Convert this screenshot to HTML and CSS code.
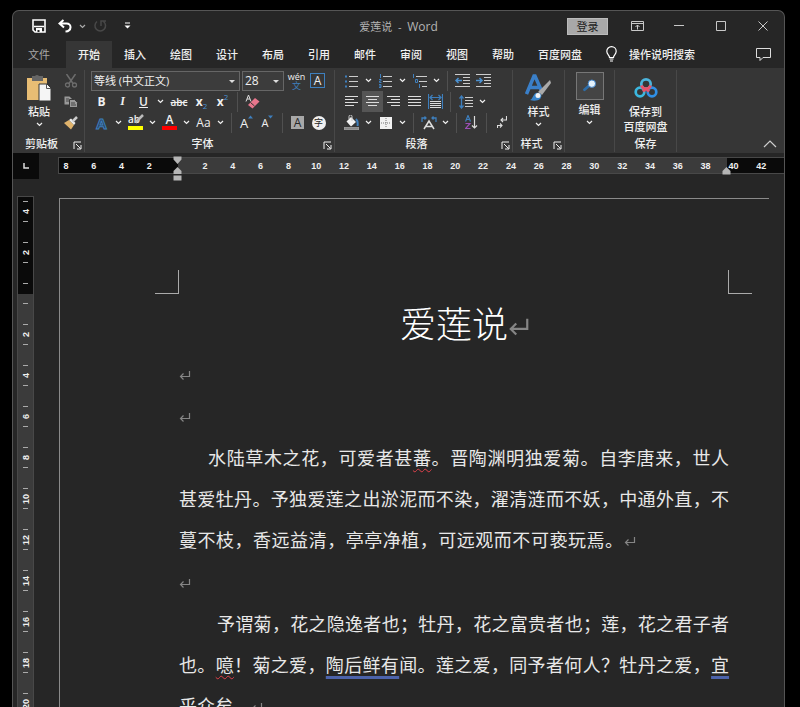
FILE: index.html
```html
<!DOCTYPE html>
<html lang="zh-CN">
<head>
    <meta charset="UTF-8">
    <meta name="viewport" content="width=device-width, initial-scale=1.0">
    <title>爱莲说 - Word</title>
    <link rel="stylesheet" href="styles.css">
</head>
<body>
    <svg class="defs" aria-hidden="true">
        <symbol id="chev" viewBox="0 0 7 5"><path d="M1 1l2.500 2.500L6 1" fill="none" stroke="currentColor" stroke-width="1.200"/></symbol>
        <symbol id="launch" viewBox="0 0 9 9"><path d="M1 8V1h7M3 3l4.500 4.500M8 4v4H4" fill="none" stroke="currentColor"/></symbol>
        <symbol id="mark" viewBox="0 0 12 10"><path d="M10.500 0v5.500H1.500M4.500 2.500l-3 3 3 3" fill="none" stroke="currentColor" stroke-width="1.200"/></symbol>
    </svg>

    <div class="window">
        <header class="titlebar">
            <div class="quick">
                <button aria-label="保存"><svg width="14" height="14" viewBox="0 0 14 14"><path d="M1 1h12v12H3l-2-2z" fill="none" stroke="#fff" stroke-width="1.600"/><path d="M2 7.500h10" stroke="#fff" stroke-width="1.600"/><path d="M4 9h6v4H4z" fill="#fff"/><path d="M5.500 11h2v2h-2z" fill="#262626"/></svg></button>
                <button class="undo" aria-label="撤消"><svg width="14" height="14" viewBox="0 0 14 14"><path d="M5.500 1L1.500 4.500l4.500 4M2 4.500h6.500c5.500 0 5.500 7.500-1 8" fill="none" stroke="#fff" stroke-width="2"/></svg></button>
                <button class="drop dim" aria-label="撤消列表"><svg width="7" height="5"><use href="#chev"/></svg></button>
                <button class="redo" aria-label="恢复"><svg width="14" height="14" viewBox="0 0 14 14"><path d="M4 2.500a5.300 5.300 0 1 0 6.500 0M8 7V2h5" fill="none" stroke="#484848" stroke-width="1.500"/></svg></button>
                <button class="custom" aria-label="自定义快速访问工具栏"><svg width="7" height="8" viewBox="0 0 7 8"><path d="M1 1h5" stroke="#fff"/><path d="M0.500 3.500h6l-3 3z" fill="#fff"/></svg></button>
            </div>
            <h1 class="caption">爱莲说&nbsp; - &nbsp;<span>Word</span></h1>
            <div class="controls">
                <button class="login">登录</button>
                <button class="ctl" aria-label="功能区显示选项"><svg width="13" height="10" viewBox="0 0 13 10"><path d="M.5.5h12v9H.5zM.5 2.500h12M6.500 8.500V4M4.500 6l2-2 2 2" fill="none" stroke="#c8c8c8"/></svg></button>
                <button class="ctl" aria-label="最小化"><svg width="10" height="10" viewBox="0 0 10 10"><path d="M0 4.500h10" stroke="#c8c8c8"/></svg></button>
                <button class="ctl" aria-label="最大化"><svg width="10" height="10" viewBox="0 0 10 10"><path d="M.5.5h9v9h-9z" fill="none" stroke="#c8c8c8"/></svg></button>
                <button class="ctl" aria-label="关闭"><svg width="10" height="10" viewBox="0 0 10 10"><path d="M.5.5l9 9M9.500.5l-9 9" stroke="#c8c8c8"/></svg></button>
            </div>
        </header>

        <nav class="tabs">
            <a href="#" class="file">文件</a>
            <a href="#" class="current">开始</a>
            <a href="#">插入</a>
            <a href="#">绘图</a>
            <a href="#">设计</a>
            <a href="#">布局</a>
            <a href="#">引用</a>
            <a href="#">邮件</a>
            <a href="#">审阅</a>
            <a href="#">视图</a>
            <a href="#">帮助</a>
            <a href="#">百度网盘</a>
            <a href="#" class="tell">
                <svg width="11" height="16" viewBox="0 0 11 16"><path d="M3.500 11.500C3.500 9 .8 8.500.8 5.300a4.700 4.700 0 0 1 9.400 0c0 3.200-2.700 3.700-2.700 6.200zM3.500 13h4M4 15h3" fill="none" stroke="#fff" stroke-width="1.200"/></svg>
                操作说明搜索</a>
            <button class="comment" aria-label="批注"><svg width="15" height="14" viewBox="0 0 15 14"><path d="M.5.5h14v9H7l-3 3v-3H.5z" fill="none" stroke="#ddd"/></svg></button>
        </nav>

        <div class="ribbon">
            <section class="group clipboard">
                <div class="tools across">
                    <button class="big">
                        <svg width="26" height="28" viewBox="0 0 26 28"><path d="M1 4h20v22H1z" fill="#e8bd74"/><path d="M6 2h3a2.500 2.500 0 0 1 4 0h4v5H6z" fill="#666"/><path d="M13 10h8l4 4v13H13z" fill="#f5f5f5" stroke="#363636"/><path d="M20.500 10v4.500H25" fill="none" stroke="#555"/></svg>
                        <span>粘贴</span>
                        <svg width="7" height="5"><use href="#chev"/></svg>
                    </button>
                    <div class="stack">
                        <button class="tool" aria-label="剪切"><svg width="14" height="14" viewBox="0 0 14 14"><path d="M2.500 0l6.500 9.500M11.500 0L5 9.500" fill="none" stroke="#6c6c6c" stroke-width="1.500"/><circle cx="3.500" cy="11" r="2" fill="none" stroke="#6c6c6c" stroke-width="1.300"/><circle cx="10.500" cy="11" r="2" fill="none" stroke="#6c6c6c" stroke-width="1.300"/></svg></button>
                        <button class="tool" aria-label="复制"><svg width="14" height="12" viewBox="0 0 14 12"><path d="M.5.5h5l2 2v6h-7z" fill="#999"/><path d="M5.500 3.500h5l3 3v5h-8z" fill="#999" stroke="#363636"/><path d="M2 3h3M2 5h3M7 7h4M7 9h5" stroke="#444"/></svg></button>
                        <button class="tool" aria-label="格式刷"><svg width="14" height="14" viewBox="0 0 14 14"><path d="M0 7l5-3 5 5-3 4.500z" fill="#e0b36c"/><path d="M5 4l2-1.500 4.500 4.500L10 9z" fill="#eee"/><path d="M8.500 5.500L13 1" stroke="#ccc" stroke-width="2.500"/></svg></button>
                    </div>
                </div>
                <div class="name"><span>剪贴板</span><button aria-label="剪贴板选项"><svg width="9" height="9"><use href="#launch"/></svg></button></div>
            </section>

            <section class="group font">
                <div class="tools">
                    <div class="row">
                        <label class="combo family"><select aria-label="字体"><option>等线 (中文正文)</option></select></label>
                        <label class="combo size"><select aria-label="字号"><option>28</option></select></label>
                        <button class="tool pinyin" aria-label="拼音指南"><span>wén</span><i>文</i></button>
                        <button class="tool" aria-label="字符边框"><span class="boxed">A</span></button>
                    </div>
                    <div class="row">
                        <button class="tool"><b>B</b></button>
                        <button class="tool italic"><i>I</i></button>
                        <button class="tool"><u>U</u></button>
                        <button class="drop" aria-label="下划线样式"><svg width="7" height="5"><use href="#chev"/></svg></button>
                        <button class="tool wide"><s>abc</s></button>
                        <button class="tool script low"><b>x</b><span>2</span></button>
                        <button class="tool script"><b>x</b><span>2</span></button>
                        <span class="sep"></span>
                        <button class="tool" aria-label="清除格式"><svg width="15" height="15" viewBox="0 0 15 15"><path d="M1 7.500L3.500 1 6 7.500M2 5h3" fill="none" stroke="#ddd"/><path d="M3 11l7-7 4.500 3.500-7 7z" fill="#e8768c"/><path d="M5.500 8.500l4 3.500" stroke="#363636"/></svg></button>
                    </div>
                    <div class="row">
                        <button class="tool effect">A</button>
                        <button class="drop" aria-label="文本效果"><svg width="7" height="5"><use href="#chev"/></svg></button>
                        <button class="tool swatch yellow"><span>ab</span><svg class="pen" width="10" height="10" viewBox="0 0 10 10"><path d="M1.500 8.500L9 1" stroke="#bbb" stroke-width="2.500"/></svg></button>
                        <button class="drop" aria-label="突出显示颜色"><svg width="7" height="5"><use href="#chev"/></svg></button>
                        <button class="tool swatch red"><span>A</span></button>
                        <button class="drop" aria-label="字体颜色"><svg width="7" height="5"><use href="#chev"/></svg></button>
                        <button class="tool case">Aa</button>
                        <button class="drop" aria-label="更改大小写"><svg width="7" height="5"><use href="#chev"/></svg></button>
                        <span class="sep"></span>
                        <button class="tool grow"><span>A</span><svg width="5" height="4" viewBox="0 0 5 4"><path d="M0 3.500L2.500.5 5 3.500z" fill="#3e7fbd"/></svg></button>
                        <button class="tool grow small"><span>A</span><svg width="5" height="4" viewBox="0 0 5 4"><path d="M0 .5L2.500 3.500 5 .5z" fill="#3e7fbd"/></svg></button>
                        <span class="sep"></span>
                        <button class="tool"><span class="shade">A</span></button>
                        <button class="tool"><span class="ring">字</span></button>
                    </div>
                </div>
                <div class="name"><span>字体</span><button aria-label="字体选项"><svg width="9" height="9"><use href="#launch"/></svg></button></div>
            </section>

            <section class="group para">
                <div class="tools">
                    <div class="row">
                        <button class="tool" aria-label="项目符号"><svg width="13" height="14" viewBox="0 0 13 14"><path d="M4 2.500h9M4 7.500h9M4 12.500h9" stroke="#ccc"/><path d="M0 1.500h2v2H0zM0 6.500h2v2H0zM0 11.500h2v2H0z" fill="#3e7fbd"/></svg></button>
                        <button class="drop" aria-label="项目符号库"><svg width="7" height="5"><use href="#chev"/></svg></button>
                        <button class="tool" aria-label="编号"><svg width="13" height="14" viewBox="0 0 13 14"><path d="M4 2.500h9M4 7.500h9M4 12.500h9" stroke="#ccc"/><path d="M1.500 0v4M0 5.500h2v1.500H.5v1.500H2.500M0 10.500h2v3H0M0 12h2" fill="none" stroke="#3e7fbd"/></svg></button>
                        <button class="drop" aria-label="编号库"><svg width="7" height="5"><use href="#chev"/></svg></button>
                        <button class="tool" aria-label="多级列表"><svg width="15" height="14" viewBox="0 0 15 14"><path d="M4 2.500h11M7 7.500h8M10 12.500h5" stroke="#ccc"/><path d="M1.500 0v4M3.500 5.500h2v3h-2zM7.500 10v4" fill="none" stroke="#3e7fbd"/></svg></button>
                        <button class="drop" aria-label="列表库"><svg width="7" height="5"><use href="#chev"/></svg></button>
                        <span class="sep"></span>
                        <button class="tool" aria-label="减少缩进量"><svg width="15" height="13" viewBox="0 0 15 13"><path d="M0 .5h15M8 3.500h7M8 6.500h7M8 9.500h7M0 12.500h15" stroke="#ccc"/><path d="M7 6.500H1M3.500 4L1 6.500 3.500 9" fill="none" stroke="#4a90d0" stroke-width="1.500"/></svg></button>
                        <button class="tool" aria-label="增加缩进量"><svg width="15" height="13" viewBox="0 0 15 13"><path d="M0 .5h15M8 3.500h7M8 6.500h7M8 9.500h7M0 12.500h15" stroke="#ccc"/><path d="M0 6.500h6M3.500 4L6 6.500 3.500 9" fill="none" stroke="#4a90d0" stroke-width="1.500"/></svg></button>
                    </div>
                    <div class="row">
                        <button class="tool" aria-label="左对齐"><svg width="13" height="11" viewBox="0 0 13 11"><path d="M0 .5h13M0 3.500h9M0 6.500h13M0 9.500h9" stroke="#ddd"/></svg></button>
                        <button class="tool on" aria-label="居中"><svg width="13" height="11" viewBox="0 0 13 11"><path d="M0 .5h13M2 3.500h9M0 6.500h13M2 9.500h9" stroke="#ddd"/></svg></button>
                        <button class="tool" aria-label="右对齐"><svg width="13" height="11" viewBox="0 0 13 11"><path d="M0 .5h13M4 3.500h9M0 6.500h13M4 9.500h9" stroke="#ddd"/></svg></button>
                        <button class="tool" aria-label="两端对齐"><svg width="13" height="11" viewBox="0 0 13 11"><path d="M0 .5h13M0 3.500h13M0 6.500h13M0 9.500h13" stroke="#ddd"/></svg></button>
                        <button class="tool" aria-label="分散对齐"><svg width="15" height="15" viewBox="0 0 15 15"><path d="M.5 0v15M14.500 0v15M2 3.500h11M4.500 1L2 3.500 4.500 6M10.500 1L13 3.500 10.500 6" fill="none" stroke="#3e7fbd" stroke-width="1.200"/><path d="M2 7.500h11M2 9.500h11M2 11.500h11M2 13.500h11" stroke="#ddd"/></svg></button>
                        <span class="sep"></span>
                        <button class="tool" aria-label="行距"><svg width="14" height="14" viewBox="0 0 14 14"><path d="M6 2.500h8M6 5.500h8M6 8.500h8M6 11.500h8" stroke="#ccc"/><path d="M2.500 1v12M.5 3.500L2.500 1l2 2.500M.5 10.500l2 2.500 2-2.500" fill="none" stroke="#3e7fbd" stroke-width="1.300"/></svg></button>
                        <button class="drop" aria-label="行距选项"><svg width="7" height="5"><use href="#chev"/></svg></button>
                    </div>
                    <div class="row">
                        <button class="tool" aria-label="底纹"><svg width="15" height="15" viewBox="0 0 15 15"><path d="M2.500 6.500L7 2l5 5-5 4.500z" fill="#f2f2f2"/><path d="M5 4V1.500a1.500 1.500 0 0 1 3 0V6" fill="none" stroke="#ccc"/><path d="M12 4c2 2 2 4 1.500 7" fill="none" stroke="#3e7fbd" stroke-width="2"/><path d="M0 12.500h15v2H0z" fill="#888" stroke="#ccc" stroke-width=".5"/></svg></button>
                        <button class="drop" aria-label="底纹颜色"><svg width="7" height="5"><use href="#chev"/></svg></button>
                        <button class="tool" aria-label="边框"><svg width="12" height="12" viewBox="0 0 12 12"><path d="M0 0h12v12H0z" fill="#f2f2f2"/><path d="M6 1v10M1 6h10" stroke="#777" stroke-dasharray="1 1"/></svg></button>
                        <button class="drop" aria-label="边框样式"><svg width="7" height="5"><use href="#chev"/></svg></button>
                        <span class="sep"></span>
                        <button class="tool" aria-label="中文版式"><svg width="16" height="14" viewBox="0 0 16 14"><path d="M3 13l5-8 5 8M5 10.500h6" fill="none" stroke="#ddd" stroke-width="1.500"/><path d="M1 6V2h4M3.500.5L5 2 3.500 3.500M15 6V2h-4M12.500.5L11 2l1.500 1.500" fill="none" stroke="#3e7fbd" stroke-width="1.300"/></svg></button>
                        <button class="drop" aria-label="中文版式选项"><svg width="7" height="5"><use href="#chev"/></svg></button>
                        <span class="sep"></span>
                        <button class="tool" aria-label="排序"><svg width="13" height="15" viewBox="0 0 13 15"><path d="M.5 6.500L3 .5l2.500 6M1.500 4.500h3" fill="none" stroke="#3e7fbd" stroke-width="1.200"/><path d="M.5 8.500H5l-4.500 5H5.500" fill="none" stroke="#9b4fb5" stroke-width="1.200"/><path d="M9.500 1v12M7 10.500L9.500 13l2.500-2.500" fill="none" stroke="#ddd" stroke-width="1.200"/></svg></button>
                        <span class="sep"></span>
                        <button class="tool" aria-label="显示编辑标记"><svg width="10" height="13" viewBox="0 0 10 13"><path d="M9.500 0v4H4M6 2L4 4l2 2M0 9.500h5M3 7.500l2 2-2 2M.5 12V9.500" fill="none" stroke="#ddd" stroke-width="1.100"/></svg></button>
                    </div>
                </div>
                <div class="name"><span>段落</span><button aria-label="段落选项"><svg width="9" height="9"><use href="#launch"/></svg></button></div>
            </section>

            <section class="group styles">
                <div class="tools">
                    <button class="big">
                        <svg width="27" height="28" viewBox="0 0 27 28"><path d="M1.500 20L9 2h1l7 16M4.500 13.500h10" fill="none" stroke="#3a7fc8" stroke-width="3.500"/><path d="M13 18L25 6l1 3-9 12z" fill="#aaa"/><path d="M5 26c3-1 3-6 6-7 5-1 7 3 4 6-2 2-7 2-10 1z" fill="#3a86cc"/><circle cx="13" cy="21.500" r="2.500" fill="#f3f3f3"/></svg>
                        <span>样式</span>
                        <svg width="7" height="5"><use href="#chev"/></svg>
                    </button>
                </div>
                <div class="name"><span>样式</span><button aria-label="样式选项"><svg width="9" height="9"><use href="#launch"/></svg></button></div>
            </section>

            <section class="group edit">
                <div class="tools">
                    <button class="big">
                        <svg class="framed" width="28" height="28" viewBox="0 0 28 28"><path d="M8 18l7-6" stroke="#2e6da8" stroke-width="3" stroke-linecap="round"/><circle cx="16" cy="11.500" r="4" fill="#e4f1fb" stroke="#3a7fc8"/></svg>
                        <span>编辑</span>
                        <svg width="7" height="5"><use href="#chev"/></svg>
                    </button>
                </div>
            </section>

            <section class="group save">
                <div class="tools">
                    <button class="big">
                        <svg width="24" height="28" viewBox="0 0 24 28"><g fill="none" stroke-width="2.700"><circle cx="6" cy="18" r="4.300" stroke="#3bb8e0"/><circle cx="18" cy="18" r="4.300" stroke="#2f8fe6"/><circle cx="12" cy="10" r="4.700" stroke="#4cb4dc"/><path d="M7.500 11.500a4.700 4.700 0 0 0 9 0M12 14.500L9 17.500M12 14.500l3 3" stroke="#e8526a"/></g></svg>
                        <span>保存到<br>百度网盘</span>
                    </button>
                </div>
                <div class="name"><span>保存</span></div>
            </section>

            <button class="collapse" aria-label="折叠功能区"><svg width="14" height="8" viewBox="0 0 14 8"><path d="M1 7l6-6 6 6" fill="none" stroke="#ccc" stroke-width="1.200"/></svg></button>
        </div>

        <div class="hbar">
            <button class="tabstop" aria-label="制表符"><svg width="6" height="6" viewBox="0 0 6 6"><path d="M1 0v5h5" fill="none" stroke="#ddd" stroke-width="1.500"/></svg></button>
            <div class="hruler">
                <div class="nums">
                    <span>8</span><span>6</span><span>4</span><span>2</span><span></span><span>2</span><span>4</span><span>6</span><span>8</span><span>10</span><span>12</span><span>14</span><span>16</span><span>18</span><span>20</span><span>22</span><span>24</span><span>26</span><span>28</span><span>30</span><span>32</span><span>34</span><span>36</span><span>38</span><span>40</span><span>42</span>
                </div>
                <svg class="indent" width="9" height="25" viewBox="0 0 9 25"><path d="M.5.5h8v3l-4 4.500-4-4.500zM4.500 11l4 4v3h-8v-3zM.5 19.500h8v5h-8z" fill="#b5b5b5"/></svg>
                <svg class="indent end" width="9" height="8" viewBox="0 0 9 8"><path d="M4.500 0l4 4v3.500h-8V4z" fill="#b5b5b5"/></svg>
            </div>
        </div>

        <div class="work">
            <div class="vruler">
                <div class="marks">
                    <span>4</span><span>2</span><span></span><span>2</span><span>4</span><span>6</span><span>8</span><span>10</span><span>12</span><span>14</span><span>16</span><span>18</span><span>20</span>
                </div>
            </div>
            <main class="page">
                <div class="corners"><span class="left"></span><span class="right"></span></div>
                <h2>爱莲说<svg class="mark" width="22" height="20"><use href="#mark"/></svg></h2>
                <p><svg class="mark" width="12" height="10"><use href="#mark"/></svg></p>
                <p><svg class="mark" width="12" height="10"><use href="#mark"/></svg></p>
                <p class="first">水陆草木之花，可爱者甚<span class="spell">蕃</span>。晋陶渊明独爱菊。自李唐来，世人甚爱牡丹。予独爱莲之出淤泥而不染，濯清涟而不妖，中通外直，不<span class="last">蔓不枝，香远益清，亭亭净植，可远观而不可亵玩焉。<svg class="mark" width="12" height="10"><use href="#mark"/></svg></span></p>
                <p><svg class="mark" width="12" height="10"><use href="#mark"/></svg></p>
                <p class="second">予谓菊，花之隐逸者也；牡丹，花之富贵者也；莲，花之君子者也。<span class="spell">噫</span>！菊之爱，<span class="grammar">陶后鲜有</span>闻。莲之爱，同予者何人？牡丹之爱，<span class="grammar">宜</span>乎众矣。<svg class="mark" width="12" height="10"><use href="#mark"/></svg></p>
            </main>
        </div>
    </div>
</body>
</html>
```

FILE: styles.css
```css
* {
    box-sizing: border-box;
}

body {
    margin: 0;
    height: 100vh;
    padding: 10px 15px 0 12px;
    overflow: hidden;
    background: #000;
    color: #f0f0f0;
    font-family: "Open Sans", "Noto Sans CJK SC", sans-serif;
    font-size: 11px;
}

button {
    display: flex;
    align-items: center;
    justify-content: center;
    margin: 0;
    padding: 0;
    border: 0;
    background: none;
    color: inherit;
    font: inherit;
}

a {
    color: inherit;
    text-decoration: none;
}

svg {
    flex: none;
}

.defs {
    display: none;
}

.window {
    display: flex;
    flex-direction: column;
    height: 100%;
    border: 1px solid #555;
    border-bottom: 0;
    border-radius: 7px 7px 0 0;
    background: #262626;
    overflow: hidden;
}

/* title bar */
.titlebar {
    display: grid;
    grid-template-columns: 1fr auto 1fr;
    align-items: center;
    height: 30px;
}

.quick {
    display: flex;
    padding-left: 14px;
}

.quick button {
    width: 24px;
    height: 24px;
}

.quick .undo {
    width: 28px;
}

.quick .drop {
    width: 7px;
    color: #aaa;
}

.quick .redo {
    width: 28px;
}

.quick .custom {
    width: 26px;
}

.caption {
    margin: 0;
    color: #b4b4b4;
    font-size: 11px;
    font-weight: 400;
}

.caption span {
    font-size: 12px;
}

.controls {
    display: flex;
    align-items: center;
    justify-content: flex-end;
}

.ctl {
    width: 42px;
    height: 26px;
}

.login {
    width: 41px;
    height: 17px;
    margin-right: 8px;
    border: 1px solid #bbb;
    background: #a8a8a8;
    color: #222;
}

/* tabs */
.tabs {
    display: flex;
    height: 27px;
    padding-left: 3px;
    font-weight: 500;
    white-space: nowrap;
}

.tabs a {
    display: flex;
    align-items: center;
    padding: 0 12px 2px;
}

.tabs .file {
    margin-right: 4px;
    color: #a8a8a8;
    font-weight: 400;
}

.tabs .current {
    background: #363636;
}

.tabs .tell {
    gap: 12px;
    padding-left: 12px;
}

.comment {
    width: 42px;
    margin-left: auto;
}

/* ribbon */
.ribbon {
    display: flex;
    height: 85px;
    padding: 2px 0 1px;
    background: #363636;
}

.group {
    display: flex;
    flex-direction: column;
    flex: none;
    border-right: 1px solid #484848;
}

.clipboard { width: 72px; }
.font { width: 250px; }
.para { width: 178px; }
.styles { width: 52px; }
.edit { width: 50px; }
.save { width: 62px; }

.tools {
    height: 64px;
}

.font .tools,
.para .tools {
    padding-left: 6px;
}

.across {
    display: flex;
    padding-left: 6px;
}

.row {
    display: flex;
    align-items: center;
    height: 21px;
}

.stack {
    padding-left: 2px;
}

.tool {
    width: 21px;
    height: 21px;
    font-size: 12px;
}

.wide {
    width: 24px;
}

.stack .tool {
    width: 20px;
}

.tool.on {
    background: #555;
}

.drop {
    width: 13px;
    height: 21px;
}

.sep {
    width: 1px;
    height: 20px;
    margin: 0 4px;
    background: #505050;
}

.name {
    display: flex;
    align-items: center;
    height: 18px;
    font-weight: 500;
    text-align: center;
}

.name span {
    flex: 1;
}

.name button {
    width: 14px;
    padding-top: 5px;
}

.big {
    flex-direction: column;
    justify-content: flex-start;
    width: 100%;
    padding-top: 4px;
    font-weight: 500;
    line-height: 15px;
}

.across .big {
    width: 40px;
}

.big span {
    margin: 2px 0 3px;
}

.big .framed {
    border: 1px solid #777;
    background: #444;
}

.edit .big {
    padding-top: 2px;
}

.combo {
    position: relative;
    height: 20px;
    border: 1px solid #666;
    background: #3c3c3c;
}

.combo::after {
    content: "";
    position: absolute;
    top: 8px;
    right: 4px;
    border: 3px solid transparent;
    border-top-color: #ddd;
    border-bottom: 0;
}

.combo select {
    display: block;
    width: 100%;
    height: 18px;
    padding: 0 2px;
    border: 0;
    appearance: none;
    background: none;
    color: #f0f0f0;
    font: inherit;
}

.family {
    width: 149px;
    margin-right: 2px;
}

.size {
    width: 42px;
    margin-right: 2px;
    font-size: 12px;
}

.pinyin {
    flex-direction: column;
    font-size: 9px;
    line-height: 9px;
}

.pinyin i {
    color: #3e7fbd;
    font-style: normal;
}

.boxed {
    width: 15px;
    height: 15px;
    border: 1px solid #3e7fbd;
    line-height: 13px;
}

.italic {
    font-family: "Liberation Serif", serif;
    font-weight: 700;
}

.tool u {
    font-weight: 600;
}

.tool s {
    font-size: 10px;
    font-weight: 600;
}

.script span {
    align-self: flex-start;
    color: #4a90d0;
    font-size: 8px;
    line-height: 12px;
}

.script.low span {
    align-self: flex-end;
}

.effect {
    color: #27425f;
    font-size: 15px;
    font-weight: 700;
    -webkit-text-stroke: 1px #3e7fbd;
}

.swatch {
    position: relative;
    width: 21px;
    padding: 0 3px;
    font-weight: 600;
}

.swatch span {
    flex: 1;
    height: 15px;
    border-bottom: 4px solid red;
    line-height: 10px;
}

.yellow span {
    border-color: #ff0;
    font-size: 10px;
    line-height: 8px;
    text-align: left;
}

.pen {
    position: absolute;
    top: 2px;
    right: 2px;
}

.grow {
    font-size: 13px;
}

.grow svg {
    align-self: flex-start;
    margin-top: 3px;
}

.grow.small {
    font-size: 11px;
}

.shade {
    width: 13px;
    height: 13px;
    background: #a8a8a8;
    color: #262626;
    line-height: 13px;
}

.ring {
    width: 14px;
    height: 14px;
    border-radius: 50%;
    background: #f0f0f0;
    color: #262626;
    font-size: 9px;
    line-height: 13px;
}

.collapse {
    align-self: flex-end;
    width: 28px;
    height: 16px;
    margin-left: auto;
}

/* rulers */
.hbar {
    display: flex;
    align-items: flex-start;
    height: 43px;
    font-size: 9px;
    font-weight: 600;
}

.tabstop {
    width: 26px;
    height: 26px;
    background: #0a0a0a;
}

.hruler {
    position: relative;
    flex: 1;
    height: 17px;
    margin: 4px 0 0 19px;
    border: solid #484848;
    border-width: 1px 0 1px 1px;
    background: linear-gradient(#0a0a0a, #0a0a0a) left / 119px 100% no-repeat,
                linear-gradient(#0a0a0a, #0a0a0a) right / 57px 100% no-repeat #3b3b3b;
    font-family: "Liberation Sans", sans-serif;
}

.nums {
    display: flex;
    height: 15px;
    margin: 0 9px 0 -7px;
    line-height: 16px;
}

.nums span {
    flex: 1;
    width: 0;
    text-align: center;
}

.indent {
    position: absolute;
    top: -2px;
    left: 114px;
}

.indent.end {
    top: auto;
    bottom: -2px;
    left: auto;
    right: 53px;
}

.work {
    display: flex;
    flex: 1;
    min-height: 0;
    padding-left: 4px;
}

.vruler {
    flex: none;
    width: 17px;
    overflow: hidden;
    border: solid #484848;
    border-width: 1px 1px 0;
    background: linear-gradient(#0a0a0a, #0a0a0a) top / 100% 97px no-repeat #3b3b3b;
    font: 700 9px "Liberation Sans", sans-serif;
}

.marks {
    margin-top: -6px;
}

.marks span {
    display: flex;
    align-items: center;
    justify-content: space-between;
    width: 15px;
    height: 41px;
    padding: 10px 0;
    writing-mode: vertical-rl;
    transform: rotate(180deg);
}

.marks span::before,
.marks span::after {
    content: "";
    width: 5px;
    height: 1px;
    background: #aaa;
}

/* document */
.page {
    flex: 1;
    margin: 2px 15px 0 25px;
    padding: 71px 40px 0 119px;
    border: solid #8a8a8a;
    border-width: 1px 0 0 1px;
    color: #e8e8e8;
    font-family: "Noto Sans CJK SC", sans-serif;
    font-size: 18px;
    font-weight: 400;
    line-height: 41px;
}

.corners {
    display: flex;
    justify-content: space-between;
    margin: 0 -23px 0 -24px;
}

.corners span {
    width: 24px;
    height: 24px;
    border-bottom: 1px solid #aaa;
}

.corners .left {
    border-right: 1px solid #aaa;
}

.corners .right {
    border-left: 1px solid #aaa;
}

.page h2 {
    margin: 0 0 3px;
    color: #fff;
    font-size: 36px;
    font-weight: 300;
    line-height: 56px;
    text-align: center;
}

.page h2 .mark {
    margin-right: -22px;
}

.page p {
    margin: 0 0 1px;
    text-align: justify;
}

.page .first {
    text-indent: 29px;
    text-align-last: justify;
}

.page .second {
    text-indent: 38px;
}

.last {
    display: block;
    width: 83%;
    text-indent: 0;
}

.mark {
    color: #858585;
}

.spell {
    text-decoration: underline wavy #e0404a 1px;
    text-underline-offset: 3px;
}

.grammar {
    text-decoration: underline #4c63ab 3px;
    text-underline-offset: 4px;
}
```
